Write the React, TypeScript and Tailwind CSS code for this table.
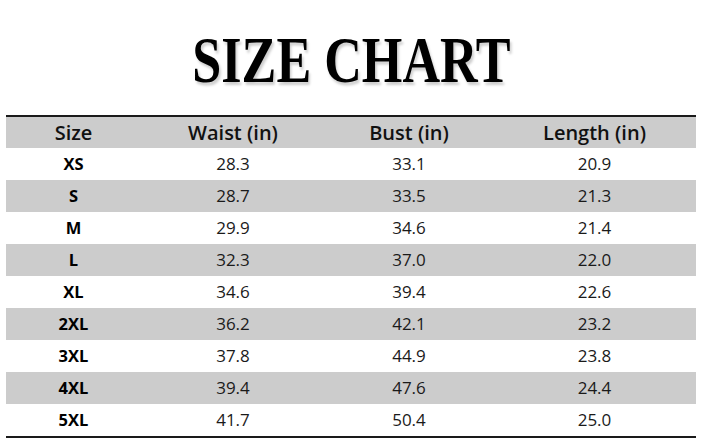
import React from "react";

const rows: [string, string, string, string][] = [
  ["XS", "28.3", "33.1", "20.9"],
  ["S", "28.7", "33.5", "21.3"],
  ["M", "29.9", "34.6", "21.4"],
  ["L", "32.3", "37.0", "22.0"],
  ["XL", "34.6", "39.4", "22.6"],
  ["2XL", "36.2", "42.1", "23.2"],
  ["3XL", "37.8", "44.9", "23.8"],
  ["4XL", "39.4", "47.6", "24.4"],
  ["5XL", "41.7", "50.4", "25.0"],
];

const cols = "grid grid-cols-[135px_184px_168px_203px]";

export default function App() {
  return (
    <div className="w-[703px] h-[443px] bg-white overflow-hidden" style={{ fontFamily: '"Open Sans", "Liberation Sans", sans-serif' }}>
      <div className="h-[115px] flex justify-center pt-[22px]">
        <h1
          className="text-[66px] leading-[76px] font-bold text-black scale-x-[0.79] whitespace-nowrap [text-shadow:2px_3px_3px_rgba(0,0,0,0.2)]"
          style={{ fontFamily: '"Liberation Serif", "DejaVu Serif", serif' }}
        >
          SIZE CHART
        </h1>
      </div>
      <div className="ml-[6px] w-[690px]">
        <div className="border-t-2 border-[#1a1a1a]" />
        <div className={`${cols} h-[31px] items-center bg-[#cccccc] text-[20px] leading-[28px] font-semibold text-[#111]`}>
          <div className="text-center">Size</div>
          <div className="text-center">Waist (in)</div>
          <div className="text-center">Bust (in)</div>
          <div className="text-center">Length (in)</div>
        </div>
        {rows.map((r, i) => (
          <div
            key={r[0]}
            className={`${cols} h-[32px] items-center text-[17px] text-[#1a1a1a] ${i % 2 === 1 ? "bg-[#cccccc]" : "bg-white"}`}
          >
            <div className="text-center font-bold text-black text-[16.5px]">{r[0]}</div>
            <div className="text-center">{r[1]}</div>
            <div className="text-center">{r[2]}</div>
            <div className="text-center">{r[3]}</div>
          </div>
        ))}
        <div className="border-t-2 border-[#1a1a1a]" />
      </div>
    </div>
  );
}
